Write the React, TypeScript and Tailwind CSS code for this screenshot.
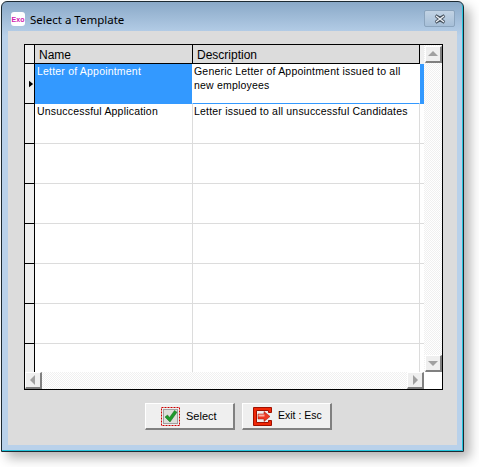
const ROWS = [
  { name: "Letter of Appointment", description: "Generic Letter of Appointment issued to all new employees", selected: true },
  { name: "Unsuccessful Application", description: "Letter issued to all unsuccessful Candidates" },
  { name: "", description: "" },
  { name: "", description: "" },
  { name: "", description: "" },
  { name: "", description: "" },
  { name: "", description: "" },
  { name: "", description: "" },
];

const TRACK = "bg-[repeating-conic-gradient(#f0f0f0_0_25%,#ffffff_0_50%)] bg-[length:2px_2px]";
const BUTTON = "flex h-[27px] w-[90px] items-center gap-[6px] border-t border-l border-r-2 border-b-2 border-t-white border-l-white border-r-[#808080] border-b-[#808080] bg-[#efefef]";

function ScrollButton({ dir }: { dir: "up" | "down" | "left" | "right" }) {
  const points = {
    up: "0,7 10,7 5,2",
    down: "0,3 10,3 5,8",
    left: "7,0 7,10 2,5",
    right: "3,0 3,10 8,5",
  }[dir];
  return (
    <div className="flex h-[17px] w-[17px] shrink-0 items-center justify-center border-t border-l border-r-2 border-b-2 border-t-white border-l-white border-r-[#808080] border-b-[#808080] bg-[#efefef]">
      <svg width="10" height="10" viewBox="0 0 10 10">
        <polygon points={points} fill="#a0a0a0" />
      </svg>
    </div>
  );
}

function CheckIcon() {
  return (
    <svg width="19" height="19" viewBox="0 0 19 19">
      <rect x="0.5" y="0.5" width="18" height="18" fill="none" stroke="#cc0000" strokeDasharray="2 1" />
      <rect x="2.5" y="2.5" width="14" height="14" fill="#dededa" stroke="#a0a0a0" />
      <path d="M4 10 L6.5 8 L8.5 10.5 L13.5 3.5 L16 5.2 L9 15 Z" fill="#1f9a2c" stroke="#136b1c" strokeWidth="0.5" />
    </svg>
  );
}

function ExitIcon() {
  return (
    <svg width="19" height="19" viewBox="0 0 19 19">
      <path d="M0.5 0.5 H18.5 V5.5 H15.5 V3.5 H3.5 V15.5 H15.5 V13.5 H18.5 V18.5 H0.5 Z" fill="#f02808" stroke="#a01000" />
      <path d="M5 7 H11 V4.5 L17 9.5 L11 14.5 V12 H5 Z" fill="#ee3a24" stroke="#a01000" strokeWidth="0.5" />
      <rect x="5.5" y="7.5" width="6" height="2" fill="#f9b0a0" />
    </svg>
  );
}

export default function App() {
  return (
    <div className="h-[467px] w-[479px] bg-white pl-px pt-px font-['Liberation_Sans',sans-serif]">
      <div className="flex h-[451px] w-[463px] flex-col rounded-t-[6px] border border-[#1c2a33] bg-[linear-gradient(#8aa9c8_0,#b9d1ea_34px)] shadow-[inset_-1px_-1px_0_#22c4dc,6px_6px_12px_rgba(0,0,0,0.3)]">
        <div className="flex h-[29px] shrink-0 items-start pl-[9px] pr-[8px] pt-[8px]">
          <div className="mt-[2px] flex h-[14px] w-[14px] items-center justify-center rounded-[3px] bg-white text-[7px] font-bold leading-none text-[#d020b0]">
            Exo
          </div>
          <span className="ml-[5px] mt-[2px] font-['Noto_Sans',sans-serif] text-[11.5px] leading-[16px] text-black">Select a Template</span>
          <div className="ml-auto flex h-[17px] w-[31px] items-center justify-center rounded-[2px] border border-[#8ba4bd] bg-gradient-to-b from-[#c2d3e4] to-[#a6bfd8]">
            <svg width="14" height="10" viewBox="0 0 14 10">
              <path d="M2.5 1.5 L7 4 L11.5 1.5 M2.5 8.5 L7 6 L11.5 8.5 M3 2 L11 8 M11 2 L3 8" fill="none" stroke="#46525e" strokeWidth="3" />
              <path d="M3 2 L11 8 M11 2 L3 8" fill="none" stroke="#eef2f6" strokeWidth="1.4" />
            </svg>
          </div>
        </div>
        <div className="mx-[6px] flex-1 bg-[#dcdcdc] px-[16px] pt-[13px]">
          <div className="flex h-[346px] w-[419px] flex-col border border-black bg-white">
            <div className="flex h-[327px] shrink-0">
              <div className="w-[399px] shrink-0 overflow-hidden">
                <div className="flex h-[19px] text-[12px] leading-[20px] text-black">
                  <div className="w-[10px] shrink-0 border-r border-b border-black bg-[#efefef]" />
                  <div className="w-[158px] shrink-0 border-r border-b border-black bg-[#dcdcdc] pl-[4px]">Name</div>
                  <div className="w-[227px] shrink-0 border-r border-b border-black bg-[#dcdcdc] pl-[4px]">Description</div>
                  <div className="flex-1 bg-[#efefef]" />
                </div>
                {ROWS.map((row, i) => (
                  <div key={i} className="flex h-[40px] text-[10.5px] leading-[14px] tracking-[0.2px]">
                    <div className="flex w-[10px] shrink-0 items-center border-r border-b border-black bg-[#efefef]">
                      {row.selected && (
                        <svg width="6" height="8" viewBox="0 0 6 8" className="ml-[4px]">
                          <polygon points="0,0 5,4 0,8" fill="#000" />
                        </svg>
                      )}
                    </div>
                    <div className={`w-[158px] shrink-0 border-r border-b pl-[2px] ${row.selected ? "border-b-[#3399ff] border-r-white bg-[#3399ff] text-white" : "border-[#dcdcdc] text-black"}`}>
                      {row.name}
                    </div>
                    <div className={`w-[227px] shrink-0 border-r border-b pl-px text-black ${row.selected ? "border-[#3399ff] border-r-white" : "border-[#dcdcdc]"}`}>
                      {row.description}
                    </div>
                    <div className={`flex-1 ${row.selected ? "bg-[#3399ff]" : "border-b border-[#dcdcdc]"}`} />
                  </div>
                ))}
              </div>
              <div className={`flex w-[18px] shrink-0 flex-col items-end justify-between pt-px ${TRACK}`}>
                <ScrollButton dir="up" />
                <ScrollButton dir="down" />
              </div>
            </div>
            <div className="flex h-[17px] shrink-0">
              <div className={`flex w-[399px] shrink-0 justify-between ${TRACK}`}>
                <ScrollButton dir="left" />
                <ScrollButton dir="right" />
              </div>
            </div>
          </div>
          <div className="ml-[121px] mt-[13px] flex gap-[7px] text-[11px] text-black">
            <button className={`${BUTTON} pl-[15px]`}>
              <CheckIcon />
              <span>Select</span>
            </button>
            <button className={`${BUTTON} pl-[10px]`}>
              <ExitIcon />
              <span className="text-[10.5px]">Exit : Esc</span>
            </button>
          </div>
        </div>
        <div className="h-[6px] shrink-0" />
      </div>
    </div>
  );
}
